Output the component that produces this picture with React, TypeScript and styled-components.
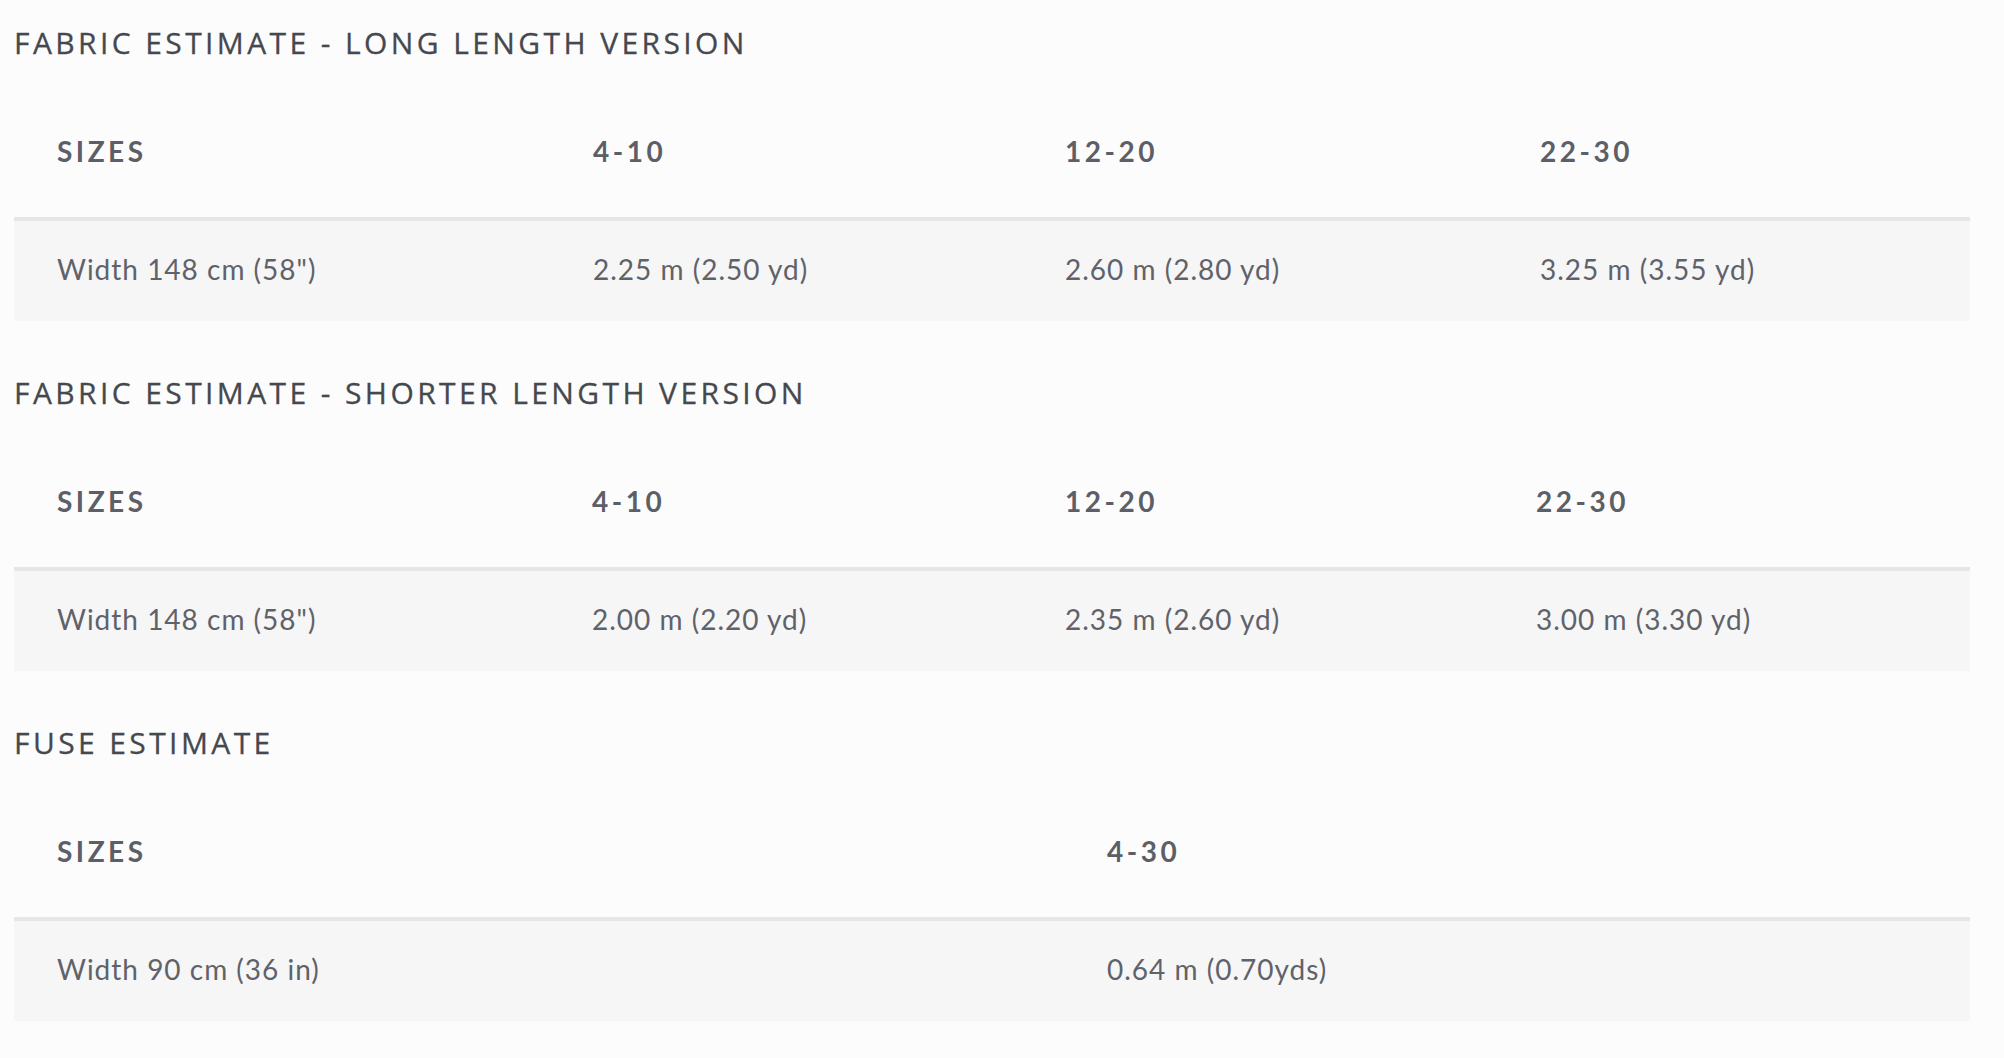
import React from "react";
import styled, { createGlobalStyle } from "styled-components";

const GlobalStyle = createGlobalStyle`
  html, body {
    margin: 0;
    padding: 0;
    background: #fcfcfc;
  }
  body {
    font-family: "Lato", "Liberation Sans", sans-serif;
    color: #5f6169;
  }
`;

const Page = styled.main`
  display: flex;
  flex-direction: column;
  padding: 0 34px 0 14px;
`;

const Section = styled.section`
  display: flex;
  flex-direction: column;
  margin-bottom: 29px;
`;

const Title = styled.h3`
  margin: 22px 0 0;
  font-family: "Open Sans", "Lato", sans-serif;
  font-weight: 500;
  font-size: 30px;
  line-height: 42px;
  letter-spacing: 3.4px;
  text-transform: uppercase;
  color: #45484e;
  -webkit-text-stroke: 0.3px #45484e;
`;

const Table = styled.table`
  width: 100%;
  border-collapse: collapse;
  table-layout: fixed;
`;

const Col = styled.col<{ $w: number }>`
  width: ${(p) => p.$w}px;
`;

const HeadRow = styled.tr`
  border-bottom: 4px solid #e6e6e6;
`;

const HeadCell = styled.th`
  padding: 66px 20px 45px 43px;
  text-align: left;
  font-family: "Lato", "Liberation Sans", sans-serif;
  font-weight: 700;
  font-size: 28px;
  line-height: 42px;
  letter-spacing: 3.5px;
  color: #5c5f67;
  text-transform: uppercase;
`;

const BodyRow = styled.tr`
  background: #f6f6f6;
`;

const BodyCell = styled.td`
  padding: 27px 20px 31px 43px;
  font-family: "Lato", "Liberation Sans", sans-serif;
  font-weight: 400;
  font-size: 28px;
  line-height: 42px;
  letter-spacing: 1px;
  color: #60626a;
`;

type Estimate = {
  title: string;
  widths: number[];
  head: string[];
  row: string[];
};

const data: Estimate[] = [
  {
    title: "Fabric estimate - long length version",
    widths: [536, 472, 475, 473],
    head: ["Sizes", "4-10", "12-20", "22-30"],
    row: ["Width 148 cm (58\")", "2.25 m (2.50 yd)", "2.60 m (2.80 yd)", "3.25 m (3.55 yd)"],
  },
  {
    title: "Fabric estimate - shorter length version",
    widths: [535, 473, 471, 477],
    head: ["Sizes", "4-10", "12-20", "22-30"],
    row: ["Width 148 cm (58\")", "2.00 m (2.20 yd)", "2.35 m (2.60 yd)", "3.00 m (3.30 yd)"],
  },
  {
    title: "Fuse estimate",
    widths: [1050, 906],
    head: ["Sizes", "4-30"],
    row: ["Width 90 cm (36 in)", "0.64 m (0.70yds)"],
  },
];

export default function App() {
  return (
    <>
      <GlobalStyle />
      <Page>
        {data.map((d) => (
          <Section key={d.title}>
            <Title>{d.title}</Title>
            <Table>
              <colgroup>
                {d.widths.map((w, i) => (
                  <Col key={i} $w={w} />
                ))}
              </colgroup>
              <thead>
                <HeadRow>
                  {d.head.map((h) => (
                    <HeadCell key={h}>{h}</HeadCell>
                  ))}
                </HeadRow>
              </thead>
              <tbody>
                <BodyRow>
                  {d.row.map((c, i) => (
                    <BodyCell key={i}>{c}</BodyCell>
                  ))}
                </BodyRow>
              </tbody>
            </Table>
          </Section>
        ))}
      </Page>
    </>
  );
}
